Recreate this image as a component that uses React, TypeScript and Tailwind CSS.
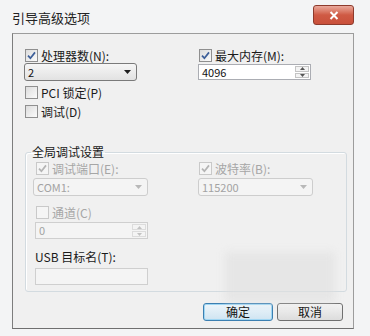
import React from "react";

type CheckProps = { checked?: boolean; disabled?: boolean };

const Check = ({ checked, disabled }: CheckProps) => (
  <span
    className={`flex h-[13px] w-[13px] shrink-0 items-center justify-center border ${
      disabled
        ? "border-[#c9c9c9] bg-[#f5f5f5]"
        : "border-[#8f8f8f] bg-linear-to-br from-[#dcdcdc] to-[#fbfbfb]"
    }`}
  >
    {checked && (
      <svg viewBox="0 0 9 9" className="h-[9px] w-[9px]">
        <path
          d="M1 4.6 L3.4 7.2 L8 1.4"
          fill="none"
          stroke={disabled ? "#b4b4b4" : "#3d5f99"}
          strokeWidth="1.7"
        />
      </svg>
    )}
  </span>
);

const CheckRow = ({
  label,
  checked,
  disabled,
}: CheckProps & { label: string }) => (
  <div className="flex h-[13px] items-center gap-[3px] pl-px">
    <Check checked={checked} disabled={disabled} />
    <span className={`text-[12px] leading-none ${disabled ? "text-[#a6a6a6]" : "text-[#1a1a1a]"}`}>
      {label}
    </span>
  </div>
);

const Arrow = ({ disabled }: { disabled?: boolean }) => (
  <svg viewBox="0 0 7 4" className="h-[4px] w-[7px]">
    <path d="M0 0 H7 L3.5 4 Z" fill={disabled ? "#b8b8b8" : "#1e1e1e"} />
  </svg>
);

const Combo = ({ value, disabled, wide }: { value: string; disabled?: boolean; wide?: boolean }) => (
  <div
    className={`flex h-[18px] items-center justify-between rounded-[3px] border pl-[3px] pr-[5px] text-[11px] ${
      wide ? "w-[115px]" : "w-[113px]"
    } ${
      disabled
        ? "border-[#cdcdcd] bg-[#f4f4f4] text-[#a3a3a3]"
        : "border-[#7a7a7a] bg-linear-to-b from-[#f6f6f6] to-[#e2e2e2] text-[#111]"
    }`}
  >
    <span>{value}</span>
    <Arrow disabled={disabled} />
  </div>
);

const Spin = ({ value, disabled }: { value: string; disabled?: boolean }) => (
  <div
    className={`flex h-[17px] w-[113px] items-stretch border ${
      disabled ? "border-[#cfcfcf] bg-[#f4f4f4] text-[#a3a3a3]" : "border-[#abadb3] bg-white text-[#111]"
    }`}
  >
    <span className="flex flex-1 items-center pl-[3px] text-[11px]">{value}</span>
    <div className="my-px mr-px flex w-[14px] flex-col gap-px">
      <div
        className={`flex flex-1 items-center justify-center border ${
          disabled ? "border-[#dcdcdc]" : "border-[#c4c4c4] bg-[#f3f3f3]"
        }`}
      >
        <svg viewBox="0 0 5 3" className="h-[3px] w-[5px]">
          <path d="M0 3 H5 L2.5 0 Z" fill={disabled ? "#c2c2c2" : "#555"} />
        </svg>
      </div>
      <div
        className={`flex flex-1 items-center justify-center border ${
          disabled ? "border-[#dcdcdc]" : "border-[#c4c4c4] bg-[#f3f3f3]"
        }`}
      >
        <svg viewBox="0 0 5 3" className="h-[3px] w-[5px]">
          <path d="M0 0 H5 L2.5 3 Z" fill={disabled ? "#c2c2c2" : "#555"} />
        </svg>
      </div>
    </div>
  </div>
);

export default function App() {
  return (
    <div className="flex h-[336px] w-[370px] flex-col bg-[#f3f4f5] font-['Noto_Sans_CJK_SC','Noto_Sans',sans-serif]">
      {/* title bar */}
      <div className="flex h-[33px] shrink-0 items-start justify-between pl-[12px] pr-[16px]">
        <span className="pt-[11px] text-[13px] leading-none text-[#222]">引导高级选项</span>
        <button className="mt-[5px] flex h-[20px] w-[41px] items-center justify-center rounded-[3px] border border-[#8d3a2c] bg-linear-to-b from-[#e9a99c] via-[#cf5a44] to-[#c9503b]">
          <svg viewBox="0 0 10 9" className="h-[9px] w-[10px]">
            <path d="M1.5 1 L8.5 8 M8.5 1 L1.5 8" stroke="white" strokeWidth="2" />
          </svg>
        </button>
      </div>

      {/* client area */}
      <div className="relative ml-[12px] mr-[16px] h-[296px] border border-[#9c9c9c] border-l-[#7d7d7d] border-b-[#6f6f6f] bg-[#f0f0f0]">
        <div className="flex pl-[11px] pt-[15px]">
          <div className="flex w-[174px] flex-col">
            <CheckRow label="处理器数(N):" checked />
            <div className="mt-px">
              <Combo value="2" />
            </div>
            <div className="mt-[5px]">
              <CheckRow label="PCI 锁定(P)" />
            </div>
            <div className="mt-[6px]">
              <CheckRow label="调试(D)" />
            </div>
          </div>
          <div className="flex flex-col">
            <CheckRow label="最大内存(M):" checked />
            <div className="mt-[2px] flex h-[16px] w-[113px] items-stretch border border-[#abadb3] bg-white">
              <span className="flex flex-1 items-center pl-[3px] text-[11px] text-[#111]">4096</span>
              <div className="my-px mr-px flex w-[14px] flex-col gap-px">
                <div className="flex flex-1 items-center justify-center border border-[#c4c4c4] bg-[#f3f3f3]">
                  <svg viewBox="0 0 5 3" className="h-[3px] w-[5px]">
                    <path d="M0 3 H5 L2.5 0 Z" fill="#555" />
                  </svg>
                </div>
                <div className="flex flex-1 items-center justify-center border border-[#c4c4c4] bg-[#f3f3f3]">
                  <svg viewBox="0 0 5 3" className="h-[3px] w-[5px]">
                    <path d="M0 0 H5 L2.5 3 Z" fill="#555" />
                  </svg>
                </div>
              </div>
            </div>
          </div>
        </div>

        {/* group box */}
        <fieldset className="ml-[12px] mr-[6px] mt-[26px] rounded-[3px] border border-[#d3dbe0] pb-[6px] pl-[9px] shadow-[inset_1px_1px_0_#ffffff]">
          <legend className="-ml-[4px] px-px text-[12px] leading-[16px] text-[#1a1a1a]">全局调试设置</legend>
          <div className="flex pt-[2px]">
            <div className="flex w-[163px] flex-col">
              <CheckRow label="调试端口(E):" checked disabled />
              <div className="mt-[3px] -ml-[2px]">
                <Combo value="COM1:" disabled wide />
              </div>
              <div className="mt-[10px]">
                <CheckRow label="通道(C)" disabled />
              </div>
              <div className="mt-[3px]">
                <Spin value="0" disabled />
              </div>
              <span className="mt-[12px] text-[12px] leading-none text-[#1a1a1a]">USB 目标名(T):</span>
              <div className="mt-[5px] h-[17px] w-[113px] border border-[#cfcfcf] bg-[#f4f4f4]" />
            </div>
            <div className="flex flex-col">
              <CheckRow label="波特率(B):" checked disabled />
              <div className="mt-[3px]">
                <Combo value="115200" disabled wide />
              </div>
            </div>
          </div>
        </fieldset>

        {/* buttons */}
        <div className="mt-[11px] flex justify-end gap-[4px] pr-[10px]">
          <button className="flex h-[18px] w-[70px] items-center justify-center rounded-[3px] border border-[#3c7fb1] bg-linear-to-b from-[#eef6fb] to-[#cfe4f1] text-[12px] leading-none text-[#111] shadow-[inset_0_0_0_1px_#9fd6f3]">
            确定
          </button>
          <button className="flex h-[18px] w-[66px] items-center justify-center rounded-[3px] border border-[#707070] bg-linear-to-b from-[#f4f4f4] to-[#dcdcdc] text-[12px] leading-none text-[#111]">
            取消
          </button>
        </div>

        {/* blurred watermark patch */}
        <div className="pointer-events-none absolute left-[212px] top-[218px] h-[50px] w-[110px] bg-[#dfdfdf]/60 blur-[4px]" />
      </div>
    </div>
  );
}
